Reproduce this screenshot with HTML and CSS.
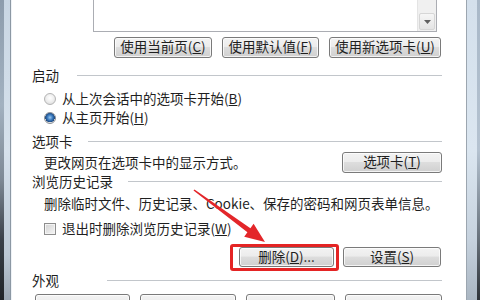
FILE: index.html
```html
<!DOCTYPE html>
<html lang="zh-CN">
<head>
<meta charset="utf-8">
<title>Internet 选项</title>
<link rel="stylesheet" href="styles.css">
</head>
<body>
<div class="window">
  <div class="frame frame-left"><i class="f-outer"></i><i class="f-glass"></i><i class="f-edge"></i></div>
  <main class="page">
    <div class="homebox">
      <div class="scroll">
        <span class="scroll-down"><svg width="7" height="4" viewBox="0 0 7 4"><path d="M0 0h7L3.5 4z" fill="#606060"/></svg></span>
      </div>
    </div>
    <div class="btnrow row-home">
      <button class="btn w98">使用当前页(<u>C</u>)</button>
      <button class="btn w97">使用默认值(<u>F</u>)</button>
      <button class="btn w112">使用新选项卡(<u>U</u>)</button>
    </div>

    <div class="legend lg-start"><span>启动</span><i></i></div>
    <div class="opt row-r1"><span class="radio"></span><span class="lbl">从上次会话中的选项卡开始(<u>B</u>)</span></div>
    <div class="opt"><span class="radio on"></span><span class="lbl">从主页开始(<u>H</u>)</span></div>

    <div class="legend lg-tabs"><span>选项卡</span><i></i></div>
    <div class="tabrow">
      <span class="desc">更改网页在选项卡中的显示方式。</span>
      <button class="btn w100">选项卡(<u>T</u>)</button>
    </div>

    <div class="legend lg-hist"><span>浏览历史记录</span><i></i></div>
    <div class="desc desc-hist">删除临时文件、历史记录、Cookie、保存的密码和网页表单信息。</div>
    <div class="opt chk-row"><span class="check"></span><span class="lbl">退出时删除浏览历史记录(<u>W</u>)</span></div>
    <div class="btnrow row-hist">
      <button class="btn w95 marked">删除(<u>D</u>)...</button>
      <button class="btn w98">设置(<u>S</u>)</button>
    </div>

    <div class="legend lg-look"><span>外观</span><i></i></div>
    <div class="row-look">
      <button class="btn w95"></button>
      <button class="btn w96"></button>
      <button class="btn w89"></button>
      <button class="btn w97"></button>
    </div>
  </main>
  <div class="frame frame-right"><i class="f-edge"></i><i class="f-glass"></i><i class="f-outer"></i></div>

  <svg class="arrow" width="82" height="62" viewBox="188 184 82 62">
    <polygon points="194.5,189.4 250.4,228.2 253.6,223.7 265,242 244.2,236.7 247.4,232.2 193.5,190.6" fill="#e3262a"/>
  </svg>
</div>
</body>
</html>
```

FILE: styles.css
```css
* { box-sizing: border-box; }

html, body {
  margin: 0;
  padding: 0;
  width: 480px;
  height: 300px;
  overflow: hidden;
  background: #fff;
}

body {
  font-family: "Noto Sans CJK SC", "Noto Sans", sans-serif;
  font-size: 13.5px;
  color: #1f1f1f;
}

.window {
  position: relative;
  display: flex;
  width: 480px;
  height: 300px;
}

/* window frame strips */
.frame { display: flex; flex: none; height: 300px; }
.frame i { display: block; height: 100%; }
.frame-left { width: 12px; }
.frame-right { width: 14px; }
.frame-left .f-outer {
  width: 4px;
  background: linear-gradient(#8d9cac, #a2b1c0 35%, #7d8894 60%, #3a4048 80%, #202428);
}
.frame-left .f-glass {
  width: 6px;
  background: linear-gradient(#c9d6e3, #d6e1ec 50%, #bcc8d4 85%, #9aa6b2);
}
.frame-left .f-edge {
  width: 2px;
  background: linear-gradient(to right, #8c98a4 0, #8c98a4 1px, #eef2f6 1px);
}
.frame-right .f-edge { width: 1px; background: #9ca6b0; }
.frame-right .f-glass {
  width: 10px;
  background: linear-gradient(#d4e0ec, #dbe6f0 50%, #c6d2de 80%, #aab6c2);
}
.frame-right .f-outer {
  width: 3px;
  background: linear-gradient(#a9b8c8, #b4c2d0 50%, #6c7680 78%, #2e3338);
}

.page {
  flex: 1;
  min-width: 0;
  padding: 0 24px 0 20px;
}

/* home page address box */
.homebox {
  position: relative;
  height: 32px;
  margin: 0 5px 0 61px;
  border: 1px solid #abadb3;
  border-top: 0;
  background: #fff;
}
.scroll {
  position: absolute;
  top: 0;
  right: 0;
  bottom: 0;
  width: 19px;
  background: #f0f0f0;
  border-left: 1px solid #e4e4e4;
}
.scroll-down {
  position: absolute;
  left: 1px;
  right: 1px;
  bottom: 1px;
  height: 17px;
  display: flex;
  align-items: center;
  justify-content: center;
  border: 1px solid #d6d6d6;
  border-radius: 2px;
  background: linear-gradient(#f6f6f6, #e4e4e4);
}

/* buttons */
.btn {
  position: relative;
  flex: none;
  display: flex;
  align-items: center;
  justify-content: center;
  height: 21px;
  margin: 0;
  padding: 0 0 1px;
  border: 1px solid #7a7a7a;
  border-radius: 3px;
  background: linear-gradient(#f3f3f3 0, #ececec 45%, #dddddd 50%, #d0d0d0 100%);
  box-shadow: inset 0 0 0 1px rgba(255, 255, 255, 0.75);
  font: inherit;
  color: inherit;
  line-height: 1;
  white-space: nowrap;
}
.btn u, .lbl u { text-decoration: underline; text-underline-offset: 1px; }
.w89 { width: 89px; }
.w95 { width: 95px; }
.w96 { width: 96px; }
.w97 { width: 97px; }
.w98 { width: 98px; }
.w100 { width: 100px; }
.w112 { width: 112px; }

.btnrow {
  display: flex;
  justify-content: flex-end;
  gap: 10px;
  padding-right: 1px;
}
.row-home { margin-top: 5px; height: 21px; }

/* group headings with rule */
.legend {
  display: flex;
  align-items: center;
  height: 16px;
  line-height: 16px;
}
.legend span { flex: none; white-space: nowrap; }
.legend i { flex: 1; height: 1px; background: #c2c6cb; }
.lg-start { margin-top: 9px; }
.lg-start span { width: 45px; }
.lg-tabs { margin-top: 6px; }
.lg-tabs span { width: 56px; }
.lg-hist { margin-top: 0; }
.lg-hist span { width: 96px; }
.lg-look { margin-top: 5px; }
.lg-look span { width: 75px; }

/* option rows */
.opt {
  display: flex;
  align-items: center;
  gap: 6px;
  height: 19px;
  padding-left: 12px;
  line-height: 1;
  white-space: nowrap;
}
.row-r1 { margin-top: 6px; }

.radio {
  flex: none;
  width: 12px;
  height: 12px;
  border-radius: 50%;
  border: 1px solid #b4b4b4;
  background: radial-gradient(circle at 50% 40%, #ffffff 0, #f0f0f0 45%, #d6d6d6 100%);
}
.radio.on {
  border-color: #8a8f96;
  background:
    radial-gradient(circle at 50% 45%, #9ccaf0 0, #3d7cc0 35%, #1c4a82 62%, transparent 66%),
    radial-gradient(circle, #f4f4f4 0, #dcdcdc 100%);
}

.check {
  flex: none;
  width: 12px;
  height: 12px;
  border: 1px solid #8e8e8e;
  box-shadow: inset 0 0 0 1px #f4f4f4;
  background: linear-gradient(135deg, #d2d2d2, #f6f6f6);
}
.chk-row { margin-top: 7px; height: 18px; }

.desc { padding-left: 12px; white-space: nowrap; line-height: 1; }

.tabrow {
  display: flex;
  align-items: center;
  justify-content: space-between;
  height: 21px;
  margin-top: 3px;
}

.desc-hist {
  display: flex;
  align-items: center;
  height: 18px;
  margin-top: 6px;
}

.row-hist { margin-top: 9px; height: 20px; gap: 9px; }
.row-hist .btn { height: 20px; }

/* red annotation box around the delete button */
.marked::after {
  content: "";
  position: absolute;
  left: -10px;
  right: -6px;
  top: -4px;
  bottom: -5px;
  border: 3px solid #e42424;
  border-radius: 3px;
}

.row-look {
  display: flex;
  justify-content: space-between;
  margin-top: 6px;
  padding-left: 3px;
}

/* red annotation arrow */
.arrow {
  position: absolute;
  left: 188px;
  top: 184px;
  pointer-events: none;
}
```
